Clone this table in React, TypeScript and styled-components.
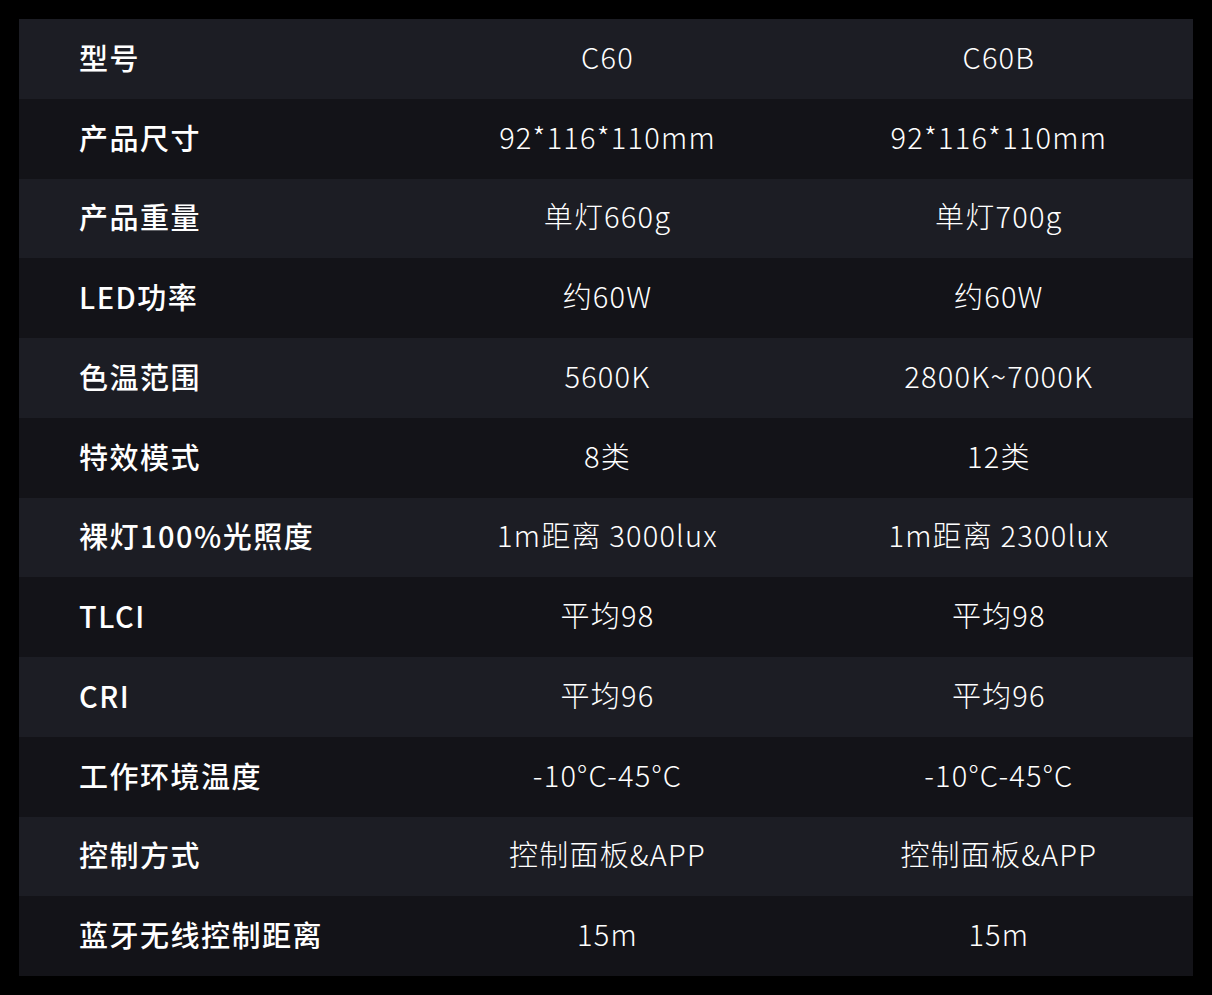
import React from "react";
import styled, { createGlobalStyle } from "styled-components";

const Global = createGlobalStyle`
  html, body { margin: 0; padding: 0; background: #000; }
  body { font-family: "Noto Sans CJK SC", "Noto Sans", sans-serif; }
`;

const Page = styled.div`
  width: 1212px;
  height: 995px;
  box-sizing: border-box;
  padding: 19px;
  background: #000;
`;

const Table = styled.div`
  width: 1174px;
  height: 957px;
  display: grid;
  grid-template-rows: repeat(12, 1fr);
`;

const Row = styled.div<{ $alt: boolean }>`
  display: grid;
  grid-template-columns: repeat(3, 1fr);
  align-items: center;
  padding-bottom: 4px;
  box-sizing: border-box;
  background: ${(p) => (p.$alt ? "#131318" : "#1c1d24")};
`;

const Label = styled.div`
  padding-left: 60px;
  font-size: 29px;
  font-weight: 500;
  letter-spacing: 1.5px;
  color: #fff;
`;

const Value = styled.div`
  text-align: center;
  padding-left: 3px;
  margin-top: -2px;
  font-size: 29px;
  font-weight: 300;
  letter-spacing: 1.2px;
  color: #fff;
`;

const rows: [string, string, string][] = [
  ["型号", "C60", "C60B"],
  ["产品尺寸", "92*116*110mm", "92*116*110mm"],
  ["产品重量", "单灯660g", "单灯700g"],
  ["LED功率", "约60W", "约60W"],
  ["色温范围", "5600K", "2800K~7000K"],
  ["特效模式", "8类", "12类"],
  ["裸灯100%光照度", "1m距离 3000lux", "1m距离 2300lux"],
  ["TLCI", "平均98", "平均98"],
  ["CRI", "平均96", "平均96"],
  ["工作环境温度", "-10°C-45°C", "-10°C-45°C"],
  ["控制方式", "控制面板&APP", "控制面板&APP"],
  ["蓝牙无线控制距离", "15m", "15m"],
];

export default function App() {
  return (
    <>
      <Global />
      <Page>
        <Table>
          {rows.map((r, i) => (
            <Row key={i} $alt={i % 2 === 1}>
              <Label>{r[0]}</Label>
              <Value>{r[1]}</Value>
              <Value>{r[2]}</Value>
            </Row>
          ))}
        </Table>
      </Page>
    </>
  );
}
